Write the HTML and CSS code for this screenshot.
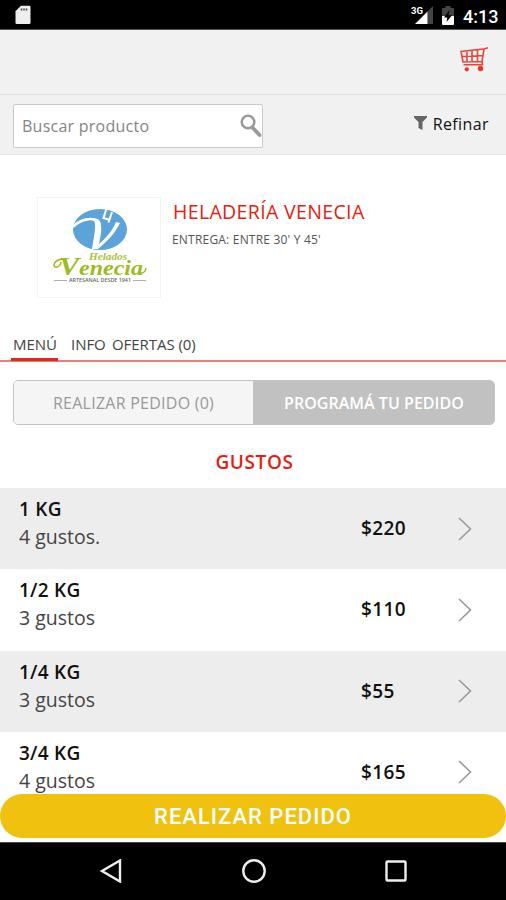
FILE: index.html
```html
<!DOCTYPE html>
<html lang="es">
<head>
<meta charset="utf-8">
<title>Heladería Venecia</title>
<link rel="stylesheet" href="styles.css">
</head>
<body>
<div class="phone">
  <header class="status">
    <svg class="sd" width="16" height="20" viewBox="0 0 16 20"><path d="M6 .8h8.200q1.300 0 1.300 1.300v15.400q0 1.500-1.500 1.500H2q-1.500 0-1.500-1.500V6.300z" fill="#eee"/><path d="M6.500 3.500v2M9 3.500v2M11.500 3.500v2" stroke="#444" stroke-width="1.500"/></svg>
    <div class="signal">
      <span class="net">3G</span>
      <svg width="18" height="18" viewBox="0 0 18 18"><path d="M12.500 5.500L18 0v18h-5.500z" fill="#444"/><path d="M0 18L12.500 5.500V18z" fill="#fff"/></svg>
    </div>
    <svg class="battery" width="12" height="19" viewBox="0 0 12 19"><path d="M0 2h3.500V0h5v2H12v8H0z" fill="#444"/><path d="M0 10h12v8q0 1-1 1H1q-1 0-1-1z" fill="#fff"/><path d="M7.500 4L2 11.500h3.300L4.500 16 10 9.200H6.600z" fill="#000"/></svg>
    <span class="clock">4:13</span>
  </header>
  <div class="topbar">
    <svg class="cart" width="29" height="27" viewBox="0 0 29 27" fill="none" stroke="#e8453b"><path d="M28 .8l-4 1.200L22 14.500 3 15 1 4.500 23.500 2M2 9.500L22.500 8.500M7 4v11M12 3.500v11.300M17.500 3v11.700M22 14.500l.5 3.300H3.500" stroke-width="1.600"/><circle cx="6.800" cy="22.300" r="2.100" fill="#e8352b" stroke="none"/><circle cx="20.500" cy="21.500" r="2.700" fill="#e8352b" stroke="none"/></svg>
  </div>
  <div class="searchbar">
    <div class="search">
      <span>Buscar producto</span>
      <svg width="22" height="24" viewBox="0 0 22 24" fill="none" stroke="#999"><circle cx="8" cy="8" r="6.300" stroke-width="2.500"/><path d="M12.500 13.500l7 7.500" stroke-width="3.800" stroke-linecap="round"/></svg>
    </div>
    <div class="refine">
      <svg width="13" height="14" viewBox="0 0 13 14"><path d="M0 0h13v1.500L8.500 6v8L4.500 12V6L0 1.500z" fill="#666"/></svg>
      <span>Refinar</span>
    </div>
  </div>
  <section class="shop">
    <div class="logo">
      <svg width="122" height="99" viewBox="0 0 122 99">
        <ellipse cx="62" cy="31.500" rx="27" ry="20.500" fill="#5ba3d9"/>
        <path d="M35 29c6-7 20-11 24-5 2 4-2 15-2 26" fill="none" stroke="#fff" stroke-width="2.600"/>
        <path d="M52 21c8 0 5 12 2 30h6c7-6 17-15 22-26l-4-1c-3 8-10 16-17 22 2-9 4-20 0-24-2-2-6-2-9-1z" fill="#fff"/>
        <path d="M68.500 10.500l-3 9.500 7 2M74 14l-3.500 10.500" fill="none" stroke="#fff" stroke-width="2"/>
        <path d="M27 61c-9-1-13 6-10 8 3 1 6-2 6-5M101 75q6 1 7-5" fill="none" stroke="#9dbb22" stroke-width="1.500"/>
        <text x="51" y="62" class="brand-small" textLength="38" lengthAdjust="spacingAndGlyphs">Helados</text>
        <text x="21" y="77" class="brand" textLength="84" lengthAdjust="spacingAndGlyphs"><tspan class="brand-cap">V</tspan>enecia</text>
        <path d="M16 82.500h13M95 82.500h13" stroke="#888" stroke-width=".7"/>
        <text x="31" y="84.300" class="brand-tag" textLength="62" lengthAdjust="spacingAndGlyphs">ARTESANAL DESDE 1941</text>
      </svg>
    </div>
    <div class="shop-info">
      <h1>HELADERÍA VENECIA</h1>
      <p>ENTREGA: ENTRE 30' Y 45'</p>
    </div>
  </section>
  <nav class="tabs">
    <span class="tab active">MENÚ</span><span class="tab info">INFO</span><span class="tab offers">OFERTAS (0)</span>
  </nav>
  <div class="modes">
    <div class="mode">REALIZAR PEDIDO (0)</div>
    <div class="mode selected">PROGRAMÁ TU PEDIDO</div>
  </div>
  <h2>GUSTOS</h2>
  <main class="items">
    <div class="item"><div class="desc"><b>1 KG</b><span>4 gustos.</span></div><strong>$220</strong><svg class="chev" width="14" height="24" viewBox="0 0 14 24"><path d="M1 1l11.500 11L1 23"/></svg></div>
    <div class="item"><div class="desc"><b>1/2 KG</b><span>3 gustos</span></div><strong>$110</strong><svg class="chev" width="14" height="24" viewBox="0 0 14 24"><path d="M1 1l11.500 11L1 23"/></svg></div>
    <div class="item"><div class="desc"><b>1/4 KG</b><span>3 gustos</span></div><strong>$55</strong><svg class="chev" width="14" height="24" viewBox="0 0 14 24"><path d="M1 1l11.500 11L1 23"/></svg></div>
    <div class="item"><div class="desc"><b>3/4 KG</b><span>4 gustos</span></div><strong>$165</strong><svg class="chev" width="14" height="24" viewBox="0 0 14 24"><path d="M1 1l11.500 11L1 23"/></svg></div>
  </main>
  <div class="order"><div class="order-button">REALIZAR PEDIDO</div></div>
  <footer class="android">
    <svg width="22" height="24" viewBox="0 0 22 24"><path d="M20 1.500v21L2 12z"/></svg>
    <svg width="26" height="26" viewBox="0 0 26 26"><circle cx="13" cy="13" r="10.700"/></svg>
    <svg width="22" height="22" viewBox="0 0 22 22"><rect x="1.500" y="1.500" width="19" height="19" rx="1"/></svg>
  </footer>
</div>
</body>
</html>
```
FILE: styles.css
```css
* { box-sizing: border-box; }
body { margin: 0; font-family: "Open Sans", "Noto Sans", sans-serif; background: #fff; color: #111; }
svg { display: block; flex: none; }
h1, h2, p { margin: 0; }
.phone { width: 506px; height: 900px; display: flex; flex-direction: column; overflow: hidden; white-space: nowrap; }
.status { height: 30px; flex: none; display: flex; align-items: flex-start; background: #000; color: #fff; border-bottom: 1px solid #555; }
.sd { margin: 5px auto 0 15px; }
.signal { display: flex; margin-top: 6px; }
.net { font: 700 9.500px/10px Roboto, sans-serif; margin-right: -8px; width: 12px; }
.battery { margin: 6px 9px 0 9px; }
.clock { font: 500 18px/21px Roboto, sans-serif; margin-top: 6px; width: 43px; }
.topbar { height: 64px; flex: none; background: #f1f1f1; display: flex; justify-content: flex-end; padding: 17px 17px 0 0; }
.searchbar { height: 61px; flex: none; background: #f1f1f1; border-top: 1px solid #ddd; border-bottom: 1px solid #e6e6e6; display: flex; justify-content: space-between; padding: 9px 17px 0 13px; }
.search { width: 250px; height: 44px; background: #fff; border: 1px solid #c9c9c9; border-radius: 2px; display: flex; align-items: center; justify-content: space-between; padding: 0 0 0 8px; font-size: 16px; letter-spacing: .25px; color: #858585; }
.refine { display: flex; align-items: center; height: 40px; font-size: 16px; font-weight: 500; letter-spacing: .4px; gap: 6px; }
.refine svg { margin-top: -2px; }
.shop { height: 173px; flex: none; display: flex; padding: 42px 0 0 37px; }
.logo { width: 124px; height: 101px; border: 1px solid #f3f3f3; }
.brand { font: italic 700 20px "Liberation Serif", serif; fill: #9dbb22; }
.brand-cap { font-size: 25px; }
.brand-small { font: italic 700 10px "Liberation Serif", serif; fill: #a9c440; }
.brand-tag { font: 600 4.500px "Open Sans", sans-serif; fill: #666; }
.shop-info { margin-left: 12px; }
h1 { font-size: 19.500px; line-height: 30px; font-weight: 500; color: #e41d12; letter-spacing: .35px; }
.shop-info p { font-size: 12px; line-height: 20px; margin-top: 3px; margin-left: -1px; color: #555; letter-spacing: .2px; }
.tabs { height: 34px; flex: none; display: flex; padding-left: 11px; border-bottom: 2px solid #e5807b; font-size: 15px; line-height: 33px; letter-spacing: -.05px; color: #444; }
.tab.active { height: 33px; width: 47px; padding-left: 2px; border-bottom: 3px solid #e22818; }
.info { margin-left: 13px; width: 41px; }
.modes { height: 45px; flex: none; margin: 18px 11px 0 13px; display: flex; border: 1px solid #c4c4c4; border-radius: 5px; overflow: hidden; font-size: 16px; font-weight: 500; line-height: 45px; text-align: center; }
.mode { width: 239px; background: #f5f5f5; color: #999; letter-spacing: .25px; }
.mode.selected { flex: 1; padding-left: 1px; background: #c1c1c1; color: #fff; font-weight: 600; letter-spacing: .03px; }
h2 { height: 63px; flex: none; padding-top: 20px; padding-left: 3px; font-size: 19px; line-height: 34px; font-weight: 600; text-align: center; color: #e41d12; letter-spacing: .6px; }
.items { flex: 1; min-height: 0; overflow: hidden; }
.item { height: 81.300px; display: flex; padding-left: 19px; }
.item:nth-child(odd) { background: #ededed; }
.desc { width: 342px; padding-top: 8px; display: flex; flex-direction: column; font-size: 19.500px; line-height: 27px; color: #444; }
.desc b { font-size: 19px; font-weight: 600; letter-spacing: .25px; color: #111; }
.item strong { width: 97px; font-size: 19px; line-height: 81.500px; font-weight: 600; letter-spacing: .4px; }
.chev { margin-top: 28.500px; fill: none; stroke: #999; stroke-width: 1.600; }
.order { height: 48px; flex: none; background: #fff; }
.order-button { height: 44px; border-radius: 22px; background: #f0c10f; color: #fff; font: 500 22px/46px Roboto, sans-serif; text-align: center; letter-spacing: 1px; }
.android { height: 58px; flex: none; background: #000; border-top: 1px solid #444; display: flex; align-items: center; padding: 0 0 2px 100px; gap: 118.500px; }
.android svg { fill: none; stroke: #eee; stroke-width: 2.400; }
```
